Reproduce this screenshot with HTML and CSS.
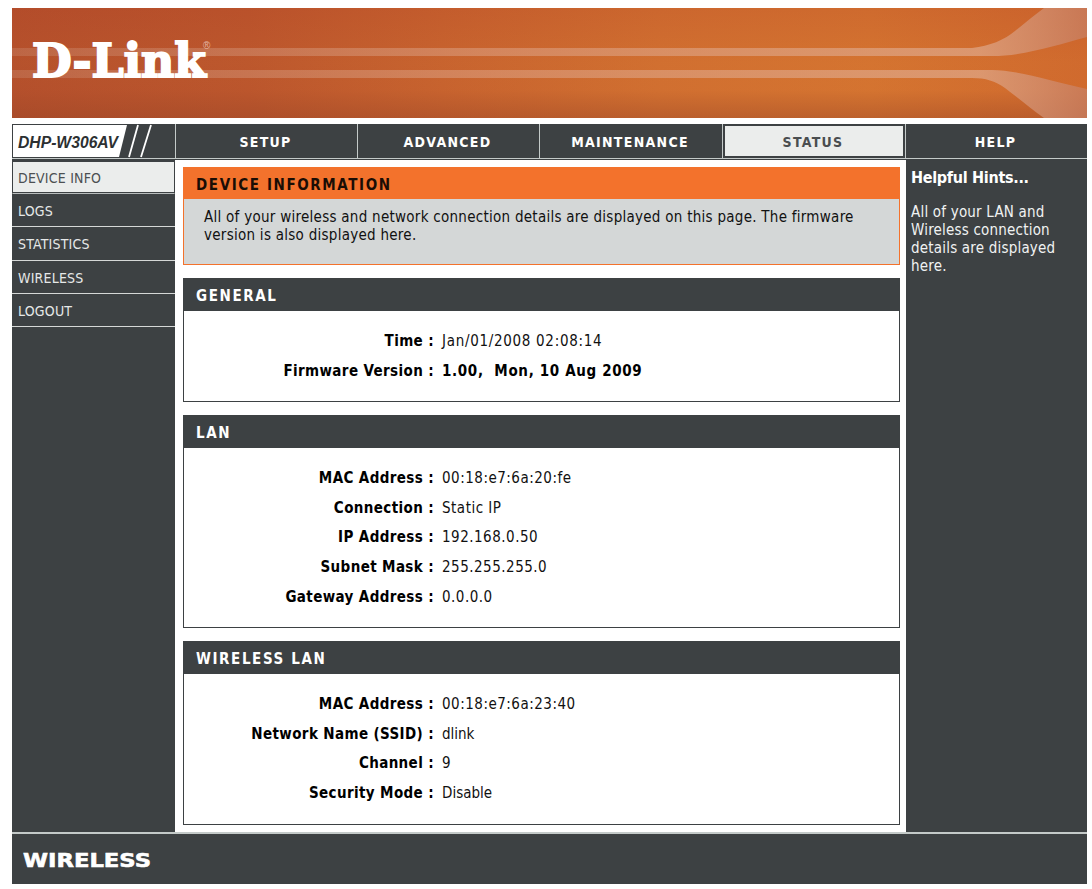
FILE: index.html
```
<!DOCTYPE html>
<html lang="en">
<head>
    <meta charset="UTF-8">
    <title>D-Link DHP-W306AV | Device Info</title>
    <link rel="stylesheet" href="styles.css">
</head>
<body>
<div class="page">
    <header class="banner">
        <svg class="banner-art" width="1075" height="110" viewBox="0 0 1075 110">
            <defs>
                <linearGradient id="swoosh" x1="0" y1="0" x2="1075" y2="0" gradientUnits="userSpaceOnUse">
                    <stop offset="0" stop-color="#d4a590" stop-opacity="0.25"/>
                    <stop offset="0.45" stop-color="#dfa78c" stop-opacity="0.5"/>
                    <stop offset="0.9" stop-color="#e0aa8d" stop-opacity="0.68"/>
                    <stop offset="1" stop-color="#c87f62" stop-opacity="0.75"/>
                </linearGradient>
            </defs>
            <path fill="url(#swoosh)" d="M0 40H960C978 38 992 32 1003 23C1014 14 1024 6 1032 0H1075V29C1045 37 1012 48 980 48H0Z"/>
            <path fill="url(#swoosh)" d="M0 62H980C1005 62 1038 73 1075 81V110H1032C1018 100 1005 89 993 80C983 73 974 70 960 70H0Z"/>
        </svg>
        <svg class="logo" width="200" height="60" viewBox="0 0 200 60">
            <text class="logo-text" x="2" y="43" textLength="174" lengthAdjust="spacingAndGlyphs">D-Link</text>
            <text class="logo-reg" x="173" y="15">®</text>
        </svg>
    </header>

    <nav class="topnav">
        <div class="model">
            <svg width="163" height="34" viewBox="0 0 163 34">
                <path fill="#fff" d="M1 1H115L107 33H1Z"/>
                <path stroke="#fff" stroke-width="1.8" d="M126 1L117 33M139 1L129 33"/>
                <text class="model-text" x="6" y="24" textLength="100" lengthAdjust="spacingAndGlyphs">DHP-W306AV</text>
            </svg>
        </div>
        <a class="tab">SETUP</a>
        <a class="tab">ADVANCED</a>
        <a class="tab">MAINTENANCE</a>
        <a class="tab active">STATUS</a>
        <a class="tab">HELP</a>
    </nav>

    <div class="columns">
        <aside class="sidebar">
            <a class="side-link active">DEVICE INFO</a>
            <a class="side-link">LOGS</a>
            <a class="side-link">STATISTICS</a>
            <a class="side-link">WIRELESS</a>
            <a class="side-link">LOGOUT</a>
        </aside>

        <main class="content">
            <section class="box intro">
                <h1>DEVICE INFORMATION</h1>
                <p>All of your wireless and network connection details are displayed on this page. The firmware<br>version is also displayed here.</p>
            </section>

            <section class="box general">
                <h2>GENERAL</h2>
                <div class="row"><span class="label">Time :</span><span class="value time">Jan/01/2008 02:08:14</span></div>
                <div class="row"><span class="label">Firmware Version :</span><span class="value strong">1.00,&nbsp; Mon, 10 Aug 2009</span></div>
            </section>

            <section class="box lan">
                <h2>LAN</h2>
                <div class="row"><span class="label">MAC Address :</span><span class="value num">00:18:e7:6a:20:fe</span></div>
                <div class="row"><span class="label">Connection :</span><span class="value num">Static IP</span></div>
                <div class="row"><span class="label">IP Address :</span><span class="value num">192.168.0.50</span></div>
                <div class="row"><span class="label">Subnet Mask :</span><span class="value num">255.255.255.0</span></div>
                <div class="row"><span class="label">Gateway Address :</span><span class="value num">0.0.0.0</span></div>
            </section>

            <section class="box wlan">
                <h2>WIRELESS LAN</h2>
                <div class="row"><span class="label">MAC Address :</span><span class="value num">00:18:e7:6a:23:40</span></div>
                <div class="row"><span class="label">Network Name (SSID) :</span><span class="value">dlink</span></div>
                <div class="row"><span class="label">Channel :</span><span class="value">9</span></div>
                <div class="row"><span class="label">Security Mode :</span><span class="value">Disable</span></div>
            </section>
        </main>

        <aside class="hints">
            <h3>Helpful Hints...</h3>
            <p>All of your LAN and<br>Wireless connection<br>details are displayed<br>here.</p>
        </aside>
    </div>

    <footer class="footer">
        <svg width="140" height="30" viewBox="0 0 140 30">
            <text class="footer-text" x="1" y="21" textLength="128" lengthAdjust="spacingAndGlyphs">WIRELESS</text>
        </svg>
    </footer>
</div>
</body>
</html>
```
FILE: styles.css
```
* {
    margin: 0;
    padding: 0;
    box-sizing: border-box;
}

body {
    background: #fff;
    font-family: Tahoma, 'DejaVu Sans Condensed', 'DejaVu Sans', sans-serif;
    font-size: 15px;
    color: #111;
}

svg {
    display: block;
}

.page {
    width: 1075px;
    margin: 8px 0 0 12px;
}

/* banner */
.banner {
    position: relative;
    height: 110px;
    background:
        linear-gradient(to bottom, rgba(190, 80, 40, 0.25), rgba(215, 120, 50, 0.15) 50%, rgba(215, 120, 50, 0.1) 75%, rgba(160, 75, 40, 0.45)),
        linear-gradient(to right, #b04b2b 0%, #b8522c 22%, #c5602e 40%, #d06e30 60%, #d47330 80%, #cf682d 100%);
}
.banner-art {
    position: absolute;
    left: 0;
    top: 0;
}
.logo {
    position: absolute;
    left: 18px;
    top: 26px;
}
.logo-text {
    font-family: 'DejaVu Serif', serif;
    font-weight: bold;
    font-size: 46px;
    fill: #fff;
    stroke: #fff;
    stroke-width: 2px;
}
.logo-reg {
    font-family: 'Liberation Sans', sans-serif;
    font-size: 10px;
    fill: #e3b5a3;
}

/* top tabs */
.topnav {
    display: grid;
    grid-template-columns: 163px 181px 181px 182px 182px 181px;
    column-gap: 1px;
    height: 36px;
    margin-top: 6px;
    padding-bottom: 1px;
    background: #c4cac9;
    border-bottom: 1px solid #3d4143;
}
.model {
    height: 34px;
    background: #3d4143;
}
.model-text {
    font-family: 'Liberation Sans', Arial, sans-serif;
    font-weight: bold;
    font-style: italic;
    font-size: 16px;
    fill: #2c3032;
}
.tab {
    height: 34px;
    padding-right: 2px;
    line-height: 36px;
    text-align: center;
    background: #3d4143;
    color: #fff;
    font-weight: bold;
    font-size: 14px;
    letter-spacing: 1.3px;
}
.tab.active {
    background: #ebedec;
    color: #4a4e50;
    border: 2px solid #3d4143;
    line-height: 32px;
}

/* three columns */
.columns {
    display: grid;
    grid-template-columns: 163px 731px 181px;
    height: 672px;
}
.sidebar {
    background: #3d4143;
}
.side-link {
    display: block;
    height: 33.3px;
    padding-left: 6px;
    border-bottom: 1px solid #d5d8d7;
    line-height: 35px;
    font-size: 14px;
    letter-spacing: 0.2px;
    color: #e6e8e8;
}
.side-link.active {
    height: 34px;
    padding-left: 5px;
    background: #ebedec;
    color: #4c5052;
    border: 1px solid #3d4143;
    border-top-width: 2px;
    border-bottom-color: #b9bdbd;
    box-shadow: inset 0 -1px #3d4143;
    line-height: 32px;
}

.content {
    padding: 7px 6px 0 8px;
}
.box {
    border: 1px solid #3d4143;
    margin-bottom: 13px;
}
.box h1,
.box h2 {
    height: 32px;
    padding-left: 12px;
    line-height: 35px;
    font-size: 15px;
    letter-spacing: 1.6px;
}
.box h2 {
    background: #3d4143;
    color: #fff;
    margin-bottom: 16px;
}
.intro {
    height: 98px;
    background: #d4d7d7;
    border-color: #f3722c;
}
.intro h1 {
    height: 31px;
    background: #f3722c;
    color: #1a0d05;
}
.intro p {
    padding: 9px 0 0 20px;
    line-height: 18px;
    letter-spacing: 0.27px;
    white-space: nowrap;
}
.general {
    height: 124px;
}
.lan {
    height: 213px;
}
.wlan {
    height: 184px;
    margin-bottom: 0;
}

.row {
    display: flex;
    height: 29.7px;
    line-height: 29.7px;
    white-space: nowrap;
}
.label {
    width: 250px;
    text-align: right;
    font-weight: bold;
    letter-spacing: 0.38px;
    color: #000;
}
.value {
    margin-left: 8px;
}
.num {
    letter-spacing: 0.5px;
}
.time {
    letter-spacing: 0.7px;
}
.strong {
    font-weight: bold;
    letter-spacing: 0.65px;
    color: #000;
}

.hints {
    padding: 8px 0 0 5px;
    background: #3d4143;
    color: #f0f2f2;
    white-space: nowrap;
}
.hints h3 {
    margin-bottom: 16px;
    line-height: 19px;
    font-size: 16px;
    letter-spacing: -0.3px;
    color: #fff;
}
.hints p {
    line-height: 18px;
    letter-spacing: 0.2px;
}

/* footer */
.footer {
    height: 52px;
    padding: 12px 0 0 10px;
    background: #3d4143;
    border-top: 2px solid #c4cac9;
}
.footer-text {
    font-family: 'DejaVu Sans', sans-serif;
    font-weight: bold;
    font-size: 20px;
    fill: #fff;
    stroke: #fff;
    stroke-width: 0.6px;
}
```
